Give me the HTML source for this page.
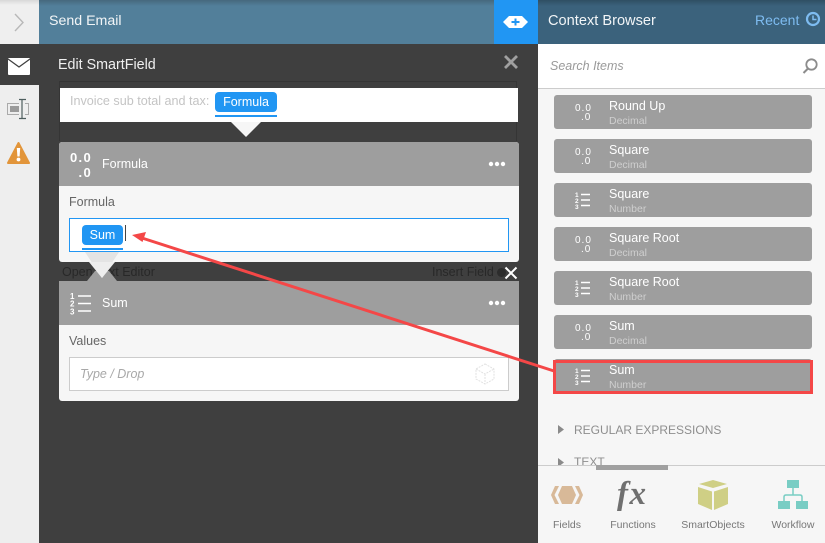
<!DOCTYPE html>
<html><head><meta charset="utf-8">
<style>
html,body{margin:0;padding:0}
body{width:825px;height:543px;overflow:hidden;position:relative;background:#3f3f3f;font-family:"Liberation Sans",sans-serif}
.a{position:absolute}
.t{position:absolute;white-space:nowrap;line-height:16px}
.item{position:absolute;left:554px;width:258px;height:34px;background:#9e9e9e;border-radius:3px}
.item .n{position:absolute;left:55px;top:4px;color:#fff;font-size:12.5px;line-height:15px}
.item .s{position:absolute;left:55px;top:20px;color:#cfcfcf;font-size:10.5px;line-height:13px}
.item svg{position:absolute;left:20px;top:8px}
.lbl{position:absolute;top:518px;color:#777;font-size:10.5px;line-height:14px;text-align:center;white-space:nowrap}
</style></head><body>

<!-- sidebar -->
<div class="a" style="left:0;top:0;width:39px;height:44px;background:linear-gradient(#d8d8d8,#efefef 5px)"></div>
<svg class="a" style="left:12px;top:12px" width="14" height="20"><path d="M3 2l8 8.500-8 8.500" fill="none" stroke="#b8b8b8" stroke-width="1.400"/></svg>
<div class="a" style="left:0;top:85px;width:39px;height:458px;background:#eee"></div>
<svg class="a" style="left:8px;top:57px" width="22" height="18"><rect width="22" height="17" y="1" rx="1" fill="#fff"/><path d="M0 2l11 8 11-8" fill="none" stroke="#3f3f3f" stroke-width="1.300"/></svg>
<svg class="a" style="left:6px;top:97px" width="26" height="24"><rect x="1.500" y="6.500" width="21" height="11" fill="none" stroke="#aaa"/><rect x="4" y="9" width="9" height="6" fill="#9a9a9a"/><rect x="13" y="2" width="6" height="20" fill="#eee"/><path d="M13 2.500h7M16 2.500v19M13 21.500h7" stroke="#4e5e5e" stroke-width="1.200" fill="none"/></svg>
<svg class="a" style="left:7px;top:141px" width="23" height="24"><path d="M11.500 2L22 22H1z" fill="#e2953a" stroke="#e2953a" stroke-width="2" stroke-linejoin="round"/><path d="M9.800 7h3.400l-.6 8.500h-2.200z" fill="#fff"/><circle cx="11.500" cy="18.500" r="1.900" fill="#fff"/></svg>

<!-- header -->
<div class="a" style="left:39px;top:0;width:455px;height:44px;background:linear-gradient(#46687d,#527f9a 6px)"></div>
<div class="t" style="left:49px;top:13px;color:#f2f5f7;font-size:14.2px">Send Email</div>
<div class="a" style="left:494px;top:0;width:44px;height:44px;background:#2196f3"></div>
<svg class="a" style="left:503px;top:15px" width="26" height="14"><path d="M6 1h13l6 6-6 6H6L0 7z" fill="#fff"/><path d="M8.500 7h8M12.500 3.500v7" stroke="#2196f3" stroke-width="2"/></svg>
<div class="a" style="left:538px;top:0;width:287px;height:44px;background:linear-gradient(#2f4f63,#3b627c 6px)"></div>
<div class="t" style="left:548px;top:13px;color:#f2f5f7;font-size:14.6px">Context Browser</div>
<div class="t" style="left:755px;top:12px;color:#7ebcf1;font-size:14px">Recent</div>
<svg class="a" style="left:805px;top:11px" width="16" height="16"><circle cx="8" cy="8" r="6" fill="none" stroke="#7ebcf1" stroke-width="2.200"/><path d="M8 4.500V8.500H11.500" fill="none" stroke="#7ebcf1" stroke-width="1.500"/></svg>

<!-- dialog -->
<div class="t" style="left:58px;top:57px;color:#f0f0f0;font-size:14.3px">Edit SmartField</div>
<svg class="a" style="left:503px;top:54px" width="16" height="16"><path d="M2 2l12 12M14 2L2 14" stroke="#a0a0a0" stroke-width="2.800"/></svg>
<div class="a" style="left:59px;top:81px;width:458px;height:60px;border:1px solid #353535;border-bottom:0;box-sizing:border-box"></div>
<div class="a" style="left:60px;top:88px;width:458px;height:34px;background:#fff"></div>
<div class="t" style="left:70px;top:93px;color:#c4c4c4;font-size:12.6px">Invoice sub total and tax:</div>
<div class="a" style="left:215px;top:92px;width:62px;height:20px;background:#2196f3;border-radius:4px;color:#fff;font-size:12.5px;line-height:20px;text-align:center">Formula</div>
<div class="a" style="left:215px;top:115px;width:62px;height:2px;background:#2196f3"></div>
<svg class="a" style="left:230px;top:122px" width="32" height="16"><path d="M1 0h30L16 15z" fill="#f6f6f6"/></svg>

<!-- formula card -->
<div class="a" style="left:59px;top:142px;width:460px;height:120px;background:#f6f6f6;border-radius:3px"></div>
<div class="a" style="left:59px;top:142px;width:460px;height:44px;background:#9e9e9e;border-radius:3px 3px 0 0"></div>
<div class="t" style="left:68px;top:150px;color:#fff;font-size:13px;font-weight:bold;letter-spacing:1.3px;line-height:15px;text-align:right;width:24px">0.0<br>.0</div>
<div class="t" style="left:102px;top:156px;color:#fff;font-size:12.5px">Formula</div>
<svg class="a" style="left:488px;top:160px" width="18" height="8"><circle cx="3" cy="4" r="2.200" fill="#fff"/><circle cx="9" cy="4" r="2.200" fill="#fff"/><circle cx="15" cy="4" r="2.200" fill="#fff"/></svg>
<div class="t" style="left:69px;top:194px;color:#666;font-size:12.5px">Formula</div>
<div class="a" style="left:69px;top:218px;width:440px;height:34px;background:#fff;border:1px solid #2196f3;box-sizing:border-box"></div>
<div class="a" style="left:82px;top:225px;width:41px;height:20px;background:#2196f3;border-radius:4px;color:#fff;font-size:12.5px;line-height:20px;text-align:center">Sum</div>
<div class="a" style="left:82px;top:248px;width:41px;height:2px;background:#2196f3"></div>
<div class="a" style="left:125px;top:225px;width:1px;height:16px;background:#444"></div>

<!-- between -->
<div class="t" style="left:62px;top:264px;color:#282828;font-size:12.5px">Open Text Editor</div>
<div class="t" style="left:432px;top:264px;color:#282828;font-size:12.5px">Insert Field</div>
<div class="a" style="left:497px;top:268px;width:9px;height:9px;background:#2c2c2c;border-radius:50%"></div>
<svg class="a" style="left:503px;top:265px" width="16" height="16"><path d="M2.500 2.500l11 11M13.500 2.500l-11 11" stroke="#fff" stroke-width="2"/></svg>

<!-- sum card -->
<div class="a" style="left:59px;top:281px;width:460px;height:120px;background:#f6f6f6;border-radius:0 0 3px 3px"></div>
<div class="a" style="left:59px;top:281px;width:460px;height:44px;background:#9e9e9e"></div>
<svg class="a" style="left:80px;top:250px" width="44" height="34"><path d="M7 31L15 21H29L37 31z" fill="#9e9e9e"/><path d="M5 2H39L22 28z" fill="#e4e4e4"/><path d="M9 12H35L22 28z" fill="#eeeeee"/></svg>
<svg class="a" style="left:69px;top:291px" width="26" height="25"><path d="M9 5h13M9 12.500h13M9 20h13" stroke="#fff" stroke-width="1.600"/><text x="1" y="8" font-size="8" font-weight="bold" fill="#fff" font-family="Liberation Sans">1</text><text x="1" y="15.500" font-size="8" font-weight="bold" fill="#fff" font-family="Liberation Sans">2</text><text x="1" y="23.500" font-size="8" font-weight="bold" fill="#fff" font-family="Liberation Sans">3</text></svg>
<div class="t" style="left:102px;top:295px;color:#fff;font-size:12.5px">Sum</div>
<svg class="a" style="left:488px;top:299px" width="18" height="8"><circle cx="3" cy="4" r="2.200" fill="#fff"/><circle cx="9" cy="4" r="2.200" fill="#fff"/><circle cx="15" cy="4" r="2.200" fill="#fff"/></svg>
<div class="t" style="left:69px;top:333px;color:#666;font-size:12.5px">Values</div>
<div class="a" style="left:69px;top:357px;width:440px;height:34px;background:#fff;border:1px solid #ccc;box-sizing:border-box"></div>
<div class="t" style="left:80px;top:366px;color:#a8a8a8;font-size:12.5px;font-style:italic">Type / Drop</div>
<svg class="a" style="left:474px;top:362px" width="22" height="24"><path d="M11 2l9 5v10l-9 5-9-5V7zM2 7l9 5 9-5M11 12v10" fill="none" stroke="#e2e2e2" stroke-dasharray="2 1"/></svg>

<!-- right panel -->
<div class="a" style="left:538px;top:44px;width:287px;height:499px;background:#f6f6f6"></div>
<div class="a" style="left:538px;top:44px;width:287px;height:45px;background:#fff;border-bottom:1px solid #ccc;box-sizing:border-box"></div>
<div class="t" style="left:550px;top:58px;color:#9a9a9a;font-size:12.5px;font-style:italic">Search Items</div>
<svg class="a" style="left:801px;top:57px" width="18" height="18"><circle cx="10.500" cy="7.500" r="5.200" fill="none" stroke="#8c8c8c" stroke-width="1.800"/><path d="M7 11.500L2.500 16" stroke="#8c8c8c" stroke-width="2"/></svg>

<div class="item" style="top:95px"><svg width="22" height="20"><text x="1" y="8" font-size="10" fill="#fff" font-family="Liberation Sans" letter-spacing="1">0.0</text><text x="7" y="17" font-size="10" fill="#fff" font-family="Liberation Sans" letter-spacing="1">.0</text></svg><div class="n">Round Up</div><div class="s">Decimal</div></div>
<div class="item" style="top:139px"><svg width="22" height="20"><text x="1" y="8" font-size="10" fill="#fff" font-family="Liberation Sans" letter-spacing="1">0.0</text><text x="7" y="17" font-size="10" fill="#fff" font-family="Liberation Sans" letter-spacing="1">.0</text></svg><div class="n">Square</div><div class="s">Decimal</div></div>
<div class="item" style="top:183px"><svg width="22" height="20"><path d="M7 3.500h9M7 9h9M7 14.500h9" stroke="#fff" stroke-width="1.600"/><text x="1" y="6" font-size="6.500" font-weight="bold" fill="#fff" font-family="Liberation Sans">1</text><text x="1" y="12" font-size="6.500" font-weight="bold" fill="#fff" font-family="Liberation Sans">2</text><text x="1" y="18" font-size="6.500" font-weight="bold" fill="#fff" font-family="Liberation Sans">3</text></svg><div class="n">Square</div><div class="s">Number</div></div>
<div class="item" style="top:227px"><svg width="22" height="20"><text x="1" y="8" font-size="10" fill="#fff" font-family="Liberation Sans" letter-spacing="1">0.0</text><text x="7" y="17" font-size="10" fill="#fff" font-family="Liberation Sans" letter-spacing="1">.0</text></svg><div class="n">Square Root</div><div class="s">Decimal</div></div>
<div class="item" style="top:271px"><svg width="22" height="20"><path d="M7 3.500h9M7 9h9M7 14.500h9" stroke="#fff" stroke-width="1.600"/><text x="1" y="6" font-size="6.500" font-weight="bold" fill="#fff" font-family="Liberation Sans">1</text><text x="1" y="12" font-size="6.500" font-weight="bold" fill="#fff" font-family="Liberation Sans">2</text><text x="1" y="18" font-size="6.500" font-weight="bold" fill="#fff" font-family="Liberation Sans">3</text></svg><div class="n">Square Root</div><div class="s">Number</div></div>
<div class="item" style="top:315px"><svg width="22" height="20"><text x="1" y="8" font-size="10" fill="#fff" font-family="Liberation Sans" letter-spacing="1">0.0</text><text x="7" y="17" font-size="10" fill="#fff" font-family="Liberation Sans" letter-spacing="1">.0</text></svg><div class="n">Sum</div><div class="s">Decimal</div></div>
<div class="item" style="top:359px"><svg width="22" height="20"><path d="M7 3.500h9M7 9h9M7 14.500h9" stroke="#fff" stroke-width="1.600"/><text x="1" y="6" font-size="6.500" font-weight="bold" fill="#fff" font-family="Liberation Sans">1</text><text x="1" y="12" font-size="6.500" font-weight="bold" fill="#fff" font-family="Liberation Sans">2</text><text x="1" y="18" font-size="6.500" font-weight="bold" fill="#fff" font-family="Liberation Sans">3</text></svg><div class="n">Sum</div><div class="s">Number</div></div>

<svg class="a" style="left:557px;top:424px" width="8" height="11"><path d="M1 1l6 4.500-6 4.500z" fill="#8a8a8a"/></svg>
<div class="t" style="left:574px;top:422px;color:#8e8e8e;font-size:12px">REGULAR EXPRESSIONS</div>
<svg class="a" style="left:557px;top:458px" width="8" height="7"><path d="M1 0l6 4.500L1 9z" fill="#8a8a8a"/></svg>
<div class="a" style="left:574px;top:455px;width:40px;height:10px;overflow:hidden"><div class="t" style="left:0;top:-1px;color:#8e8e8e;font-size:12px">TEXT</div></div>

<!-- bottom bar -->
<div class="a" style="left:538px;top:465px;width:287px;height:78px;background:#f6f6f6;border-top:1px solid #ccc;box-sizing:border-box"></div>
<div class="a" style="left:596px;top:465px;width:72px;height:5px;background:#a0a0a0"></div>
<svg class="a" style="left:550px;top:483px" width="34" height="24"><path d="M12 3H22L26 12 22 21H12L8 12z" fill="#d8b998"/><path d="M5 3H9L4.500 12 9 21H5L1 12zM29 3H25L29.500 12 25 21H29L33 12z" fill="#d8b998"/></svg>
<div class="a" style="left:617px;top:476px;color:#707070;font-family:'Liberation Serif',serif;font-style:italic;font-weight:bold;font-size:33px;line-height:36px;letter-spacing:1.500px;white-space:nowrap">fx</div>
<svg class="a" style="left:697px;top:479px" width="32" height="32"><path d="M16 1l14 4-14 4L2 5z" fill="#cfcf85"/><path d="M1 8l14 4.500V31L1 25zM31 8l-14 4.500V31l14-6z" fill="#cfcf85"/></svg>
<svg class="a" style="left:777px;top:479px" width="32" height="32"><rect x="10" y="1" width="12" height="8" fill="#79cdc4"/><rect x="1" y="22" width="12" height="8" fill="#79cdc4"/><rect x="19" y="22" width="12" height="8" fill="#79cdc4"/><path d="M16 9v7M7 22v-4q0-2 2-2h14q2 0 2 2v4" fill="none" stroke="#79cdc4" stroke-width="1.500"/></svg>
<div class="lbl" style="left:553px;width:28px">Fields</div>
<div class="lbl" style="left:605px;width:56px">Functions</div>
<div class="lbl" style="left:676px;width:74px">SmartObjects</div>
<div class="lbl" style="left:765px;width:56px">Workflow</div>

<!-- red annotations -->
<svg class="a" style="left:0;top:0;z-index:5" width="825" height="543"><rect x="554.500" y="361.500" width="257" height="31" fill="none" stroke="#f44747" stroke-width="3"/><path d="M554 371L142 238" stroke="#f44747" stroke-width="3"/><path d="M132 235l14-3-3.500 10z" fill="#f44747"/></svg>
</body></html>
